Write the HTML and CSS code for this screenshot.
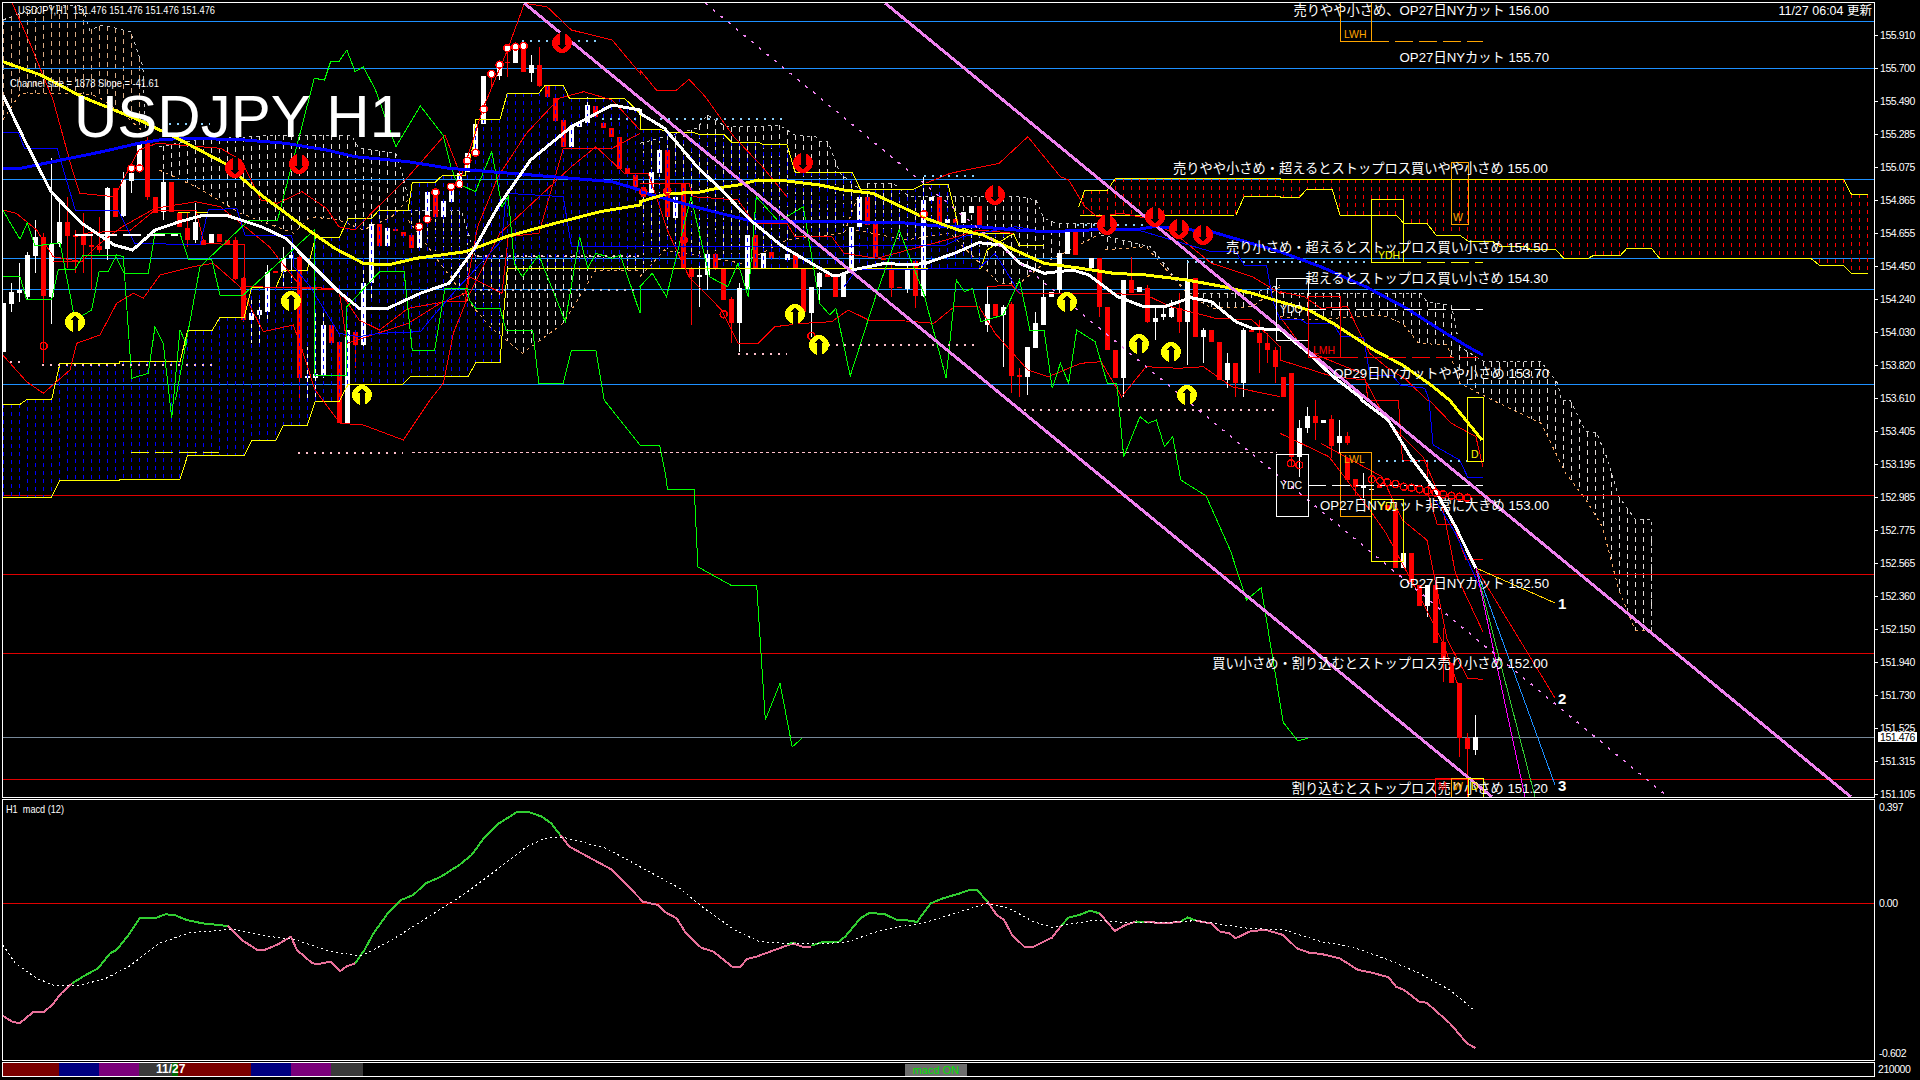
FILE: index.html
```html
<!DOCTYPE html>
<html lang="ja">
<head>
<meta charset="utf-8">
<title>USDJPY H1</title>
<link rel="stylesheet" href="styles.css">
</head>
<body>
<main class="terminal">
  <section class="pane pane-main">
    <div class="plot">
      <svg id="main-chart" class="chart" viewBox="3 3 1871 794" preserveAspectRatio="none">
        <g id="main-layer"></g>
        <text class="title" x="74" y="137">USDJPY H1</text>
        <text class="info" x="18" y="14" textLength="197" lengthAdjust="spacingAndGlyphs">USDJPY,H1  151.476 151.476 151.476 151.476</text>
        <text class="info" x="10" y="87" textLength="149" lengthAdjust="spacingAndGlyphs">Channel size = 1878 Slope = -41.61</text>
        <text class="stamp" x="1872" y="15">11/27 06:04 更新</text>
        <text class="note" x="1549" y="15">売りやや小さめ、OP27日NYカット 156.00</text>
        <text class="note" x="1549" y="62">OP27日NYカット 155.70</text>
        <text class="note" x="1548" y="173">売りやや小さめ・超えるとストップロス買いやや小さめ 155.00</text>
        <text class="note" x="1548" y="252">売り小さめ・超えるとストップロス買い小さめ 154.50</text>
        <text class="note" x="1548" y="283">超えるとストップロス買い小さめ 154.30</text>
        <text class="note" x="1549" y="378">OP29日NYカットやや小さめ 153.70</text>
        <text class="note" x="1549" y="510">OP27日NYカット非常に大きめ 153.00</text>
        <text class="note" x="1549" y="588">OP27日NYカット 152.50</text>
        <text class="note" x="1548" y="668">買い小さめ・割り込むとストップロス売り小さめ 152.00</text>
        <text class="note" x="1548" y="793">割り込むとストップロス売り小さめ 151.20</text>
        <text class="box-label orange" x="1344" y="38">LWH</text>
        <text class="box-label orange" x="1453" y="221">W</text>
        <text class="box-label yellow" x="1378" y="259">YDH</text>
        <text class="box-label white" x="1280" y="313">YDO</text>
        <text class="box-label red" x="1313" y="354">LMH</text>
        <text class="box-label white" x="1280" y="489">YDC</text>
        <text class="box-label orange" x="1344" y="463">LWL</text>
        <text class="box-label yellow" x="1378" y="510">YDL</text>
        <text class="box-label yellow" x="1471" y="458">D</text>
        <text class="box-label red" x="1438" y="790">M</text>
        <text class="box-label orange" x="1453" y="790">W</text>
        <text class="box-label yellow" x="1471" y="790">D</text>
        <text class="fib" x="1558" y="609">1</text>
        <text class="fib" x="1558" y="704">2</text>
        <text class="fib" x="1558" y="791">3</text>
      </svg>
    </div>
    <div class="axis axis-price">
      <span>155.910</span><span>155.700</span><span>155.490</span><span>155.285</span>
      <span>155.075</span><span>154.865</span><span>154.655</span><span>154.450</span>
      <span>154.240</span><span>154.030</span><span>153.820</span><span>153.610</span>
      <span>153.405</span><span>153.195</span><span>152.985</span><span>152.775</span>
      <span>152.565</span><span>152.360</span><span>152.150</span><span>151.940</span>
      <span>151.730</span><span>151.525</span><span>151.315</span><span>151.105</span>
      <b class="price-tag">151.476</b>
    </div>
  </section>

  <section class="pane pane-macd">
    <div class="plot">
      <svg id="macd-chart" class="chart" viewBox="3 800 1871 260" preserveAspectRatio="none">
        <g id="macd-layer"></g>
        <text class="info" x="6" y="813" textLength="58" lengthAdjust="spacingAndGlyphs">H1  macd (12)</text>
      </svg>
    </div>
    <div class="axis axis-macd">
      <span class="tick-top">0.397</span>
      <span class="zero">0.00</span>
      <span class="tick-low">-0.602</span>
    </div>
  </section>

  <section class="pane pane-strip">
    <div class="plot strip">
      <i class="seg seg-red seg-w1"></i>
      <i class="seg seg-blue seg-w2"></i>
      <i class="seg seg-purple seg-w2"></i>
      <i class="seg seg-gray seg-w3"></i>
      <i class="seg seg-green seg-w4"></i>
      <i class="seg seg-red seg-w5"></i>
      <i class="seg seg-blue seg-w2"></i>
      <i class="seg seg-purple seg-w2"></i>
      <i class="seg seg-gray seg-w6"></i>
      <b class="strip-date">11/27</b>
      <span class="strip-ok">macd ON</span>
    </div>
    <div class="axis axis-strip"><span>210000</span></div>
  </section>
</main>
<script src="script.js"></script>
</body>
</html>
```

FILE: styles.css
```css
* { box-sizing: border-box; }

html, body {
  margin: 0;
  width: 1920px;
  height: 1080px;
  overflow: hidden;
  background: #000;
}

body {
  color: #fff;
  font-family: "Liberation Sans", "Noto Sans CJK JP", sans-serif;
}

.terminal {
  display: flex;
  flex-direction: column;
  gap: 1px;
  padding: 2px 0 0 2px;
  width: 1920px;
  height: 1080px;
}

.pane { display: flex; flex: none; position: relative; }
.pane-main { height: 796px; }
.pane-macd { height: 262px; }
.pane-strip { height: 15px; }

.plot {
  flex: none;
  width: 1873px;
  height: 100%;
  border: 1px solid #fff;
  overflow: hidden;
}

.chart {
  display: block;
  width: 100%;
  height: 100%;
  shape-rendering: crispEdges;
}

.axis {
  position: relative;
  flex: 1;
  font-size: 10.5px;
  letter-spacing: -0.45px;
  line-height: 12px;
  color: #fff;
}

.axis span { display: block; padding-left: 5px; white-space: nowrap; }

.axis-price { padding-top: 11px; display: flex; flex-direction: column; }
.axis-price span {
  position: relative;
  flex: none;
  height: 33px;
  line-height: 44px;
}
.axis-price span::before {
  content: "";
  position: absolute;
  left: 0;
  top: 22px;
  width: 3px;
  height: 1px;
  background: #fff;
}

.price-tag {
  position: absolute;
  left: 3px;
  top: 730px;
  width: 39px;
  height: 10px;
  background: #fff;
  color: #000;
  font-weight: normal;
  font-size: 10.5px;
  line-height: 10px;
  text-align: center;
}

.axis-macd { padding-top: 2px; }
.axis-macd span { padding-left: 4px; }
.axis-macd .zero { position: relative; margin-top: 84px; }
.axis-macd .zero::before {
  content: "";
  position: absolute;
  left: 2px;
  top: 0;
  width: 4px;
  height: 12px;
  background: #f00;
  z-index: -1;
}
.axis-macd .tick-low { margin-top: 138px; }

.axis-strip { padding-top: 1px; }
.axis-strip span { padding-left: 3px; }

.strip { display: flex; align-items: stretch; position: relative; }
.seg { display: block; flex: none; }
.seg-red { background: #7a0000; }
.seg-blue { background: #000080; }
.seg-purple { background: #7a007a; }
.seg-gray { background: #3a3a3a; }
.seg-green { background: #006a00; }
.seg-w1 { width: 56px; }
.seg-w2 { width: 40px; }
.seg-w3 { width: 33px; }
.seg-w4 { width: 6px; }
.seg-w5 { width: 73px; }
.seg-w6 { width: 32px; }

.strip-date {
  position: absolute;
  left: 153px;
  top: 0;
  font-size: 12px;
  line-height: 13px;
  color: #fff;
}

.strip-ok {
  position: absolute;
  left: 902px;
  top: 1px;
  width: 62px;
  height: 12px;
  background: #6e6e6e;
  color: #00e000;
  font-size: 11px;
  line-height: 13px;
  text-align: center;
}

.title {
  fill: #fff;
  font-family: "Liberation Sans", sans-serif;
  font-size: 60px;
}

.info {
  fill: #fff;
  font-size: 10.5px;
  white-space: pre;
}

.stamp {
  fill: #fff;
  font-family: "Liberation Sans", "Noto Sans CJK JP", sans-serif;
  font-size: 12.5px;
  text-anchor: end;
}

.note {
  fill: #fff;
  font-family: "Liberation Sans", "Noto Sans CJK JP", sans-serif;
  font-size: 13.25px;
  text-anchor: end;
}

.box-label { font-size: 10.5px; }
.orange { fill: #ffa500; }
.yellow { fill: #ffff00; }
.white { fill: #fff; }
.red { fill: #ff0000; }

.fib {
  fill: #fff;
  font-weight: bold;
  font-size: 15px;
}
```

FILE: script.js
```js
const NS = 'http://www.w3.org/2000/svg';
const scaler = (x0, y0, kx, ky) => pts => {
  const out = [];
  for (let i = 0; i < pts.length; i += 2) out.push([x0 + pts[i] / kx, y0 + pts[i + 1] / ky]);
  return out;
};
const Z1 = scaler(0, 0, 2.45, 3);
const Z2 = scaler(640, 0, 2.45, 3);
const Z3 = scaler(1280, 0, 2.45, 3);
const Z4 = scaler(1280, 400, 2.45, 3);
const Z5 = scaler(0, 780, 1.633, 3);
const Z6 = scaler(960, 780, 1.633, 3);
const Z7 = scaler(0, 200, 3, 3);
const Z8 = scaler(640, 160, 2.45, 3);
const O = scaler(0, 0, 0.8167, 0.8167);

function el(parent, name, attrs) {
  const n = document.createElementNS(NS, name);
  for (const k in attrs) n.setAttribute(k, attrs[k]);
  parent.appendChild(n);
  return n;
}
function poly(g, pts, stroke, width, dash) {
  const a = { points: pts.map(p => p[0].toFixed(1) + ',' + p[1].toFixed(1)).join(' '), fill: 'none', stroke, 'stroke-width': width || 1 };
  if (dash) a['stroke-dasharray'] = dash;
  el(g, 'polyline', a);
}
function line(g, x1, y1, x2, y2, stroke, width, dash) {
  poly(g, [[x1, y1], [x2, y2]], stroke, width, dash);
}
function yAt(pts, x) {
  if (x < pts[0][0] || x > pts[pts.length - 1][0]) return null;
  for (let i = 1; i < pts.length; i++) {
    if (x <= pts[i][0]) {
      const a = pts[i - 1], b = pts[i];
      const d = b[0] - a[0];
      return d === 0 ? b[1] : a[1] + (b[1] - a[1]) * (x - a[0]) / d;
    }
  }
  return null;
}
function hatch(g, up, low, color, dash) {
  for (let x = 3.5; x < 1872; x += 8) {
    const a = yAt(up, x), b = yAt(low, x);
    if (a === null || b === null || b - a < 2) continue;
    line(g, x, a, x, b, color, 1, dash || '4 4');
  }
}

const main = document.getElementById('main-layer');

/* Ichimoku step lines */
const senkouLow = Z7([8,891,155,891,180,841,358,841,358,838,540,838,563,766,733,766,755,721,828,721,850,676,922,676,946,604,1018,604,1045,552,1210,552,1233,529,1405,529,1428,487,1500,487])
  .concat(Z1([1225,1085,1243,805,1568,805]), Z2([835,805,850,750,915,700,928,735,990,735]));
const senkouHigh = Z7([8,613,60,613,82,598,155,598,180,490,358,490,358,485,540,485,563,392,636,392,660,352,733,352,755,262,828,262,850,211,922,211,946,112,1018,112,1045,55,1115,55,1135,32,1210,32])
  .concat(Z1([1000,630,1010,548,1065,548,1085,525,1140,525,1160,435,1165,358,1225,358,1243,280,1320,280,1335,257,1380,257,1395,295,1530,295,1568,340]),
          Z2([0,388,50,388,70,397,130,397,145,403,205,403,225,427,290,427,300,433,360,433,380,517,520,517,540,568,670,568,695,553,755,553,775,653,780,680,830,700,915,700]));
const cloudUp = senkouHigh.filter(p => !(p[0] > 406 && p[0] < 412 && p[1] > 200));
const red1 = Z2([1075,620,1090,570,1145,570,1165,535,1568,535]).concat(Z3([0,537,1380,537,1400,583,1440,583]));
const red2 = Z2([1075,645,1260,647,1460,645,1480,590,1568,590]).concat(Z3([0,592,48,592,65,568,128,568,147,645,285,645,303,670,360,670,382,705,440,705,460,723,520,723,537,738,600,738,612,748,675,748,695,775,755,775,770,765,835,765,850,745,910,745,930,775,1300,775,1322,796,1380,796,1400,820,1440,820]));

/* Secondary cloud hatching */
const pale = '#e4dcd8', peach = '#f4a460';
const clouds = [
  [Z1([7,60,60,35,120,15,200,15,220,90,250,75,320,95,350,200,356,400]), Z1([7,360,50,280,200,280,240,290,300,340,356,400]), '#d8aa84'],
  [Z1([390,440,480,420,680,405,860,405,880,445,970,460,990,540,1000,600]), Z1([390,510,480,560,590,640,720,700,760,650,830,660,890,690,960,650,1000,600]), pale],
  [Z1([1000,630,1130,630,1165,770,1568,770]), Z1([1000,660,1145,900,1200,980,1280,1060,1380,970,1460,810,1568,810]), pale],
  [Z2([0,430,140,385,165,345,210,380,280,380,340,375,380,405,430,410,440,425,460,425,490,520,540,570]), Z2([0,830,60,750,250,790,360,720,500,700,540,570]), pale],
  [Z2([555,550,620,550,660,590,760,590,930,590,970,600,990,655,1020,670,1130,670]), Z2([530,690,650,720,760,700,880,850,930,850,990,790,1130,700]), pale],
  [Z2([1130,705,1250,740,1290,800,1340,880,1500,880,1568,855]), Z2([1140,750,1240,740,1340,880,1400,925,1500,920,1568,860]), pale],
  [Z3([0,880,345,880,360,905,420,915,440,1040,500,1085,640,1085,680,1150,690,1200]).concat(Z4([710,0,750,95,775,97,800,170,830,290,870,358,910,358,911,690])),
   Z3([0,950,70,960,250,945,300,970,340,1030,410,1035,440,1150,520,1200]).concat(Z4([640,70,700,220,750,300,790,380,830,570,870,690,911,690])), pale]
];
clouds.forEach(c => {
  hatch(main, c[0], c[1], c[2], '5 4');
  poly(main, c[0], '#c8c8c8', 1, '3 4');
  poly(main, c[1], peach, 1, '3 4');
});

/* Horizontal price levels */
[21, 68, 179, 258, 289, 384].forEach(y => line(main, 3, y + .5, 1874, y + .5, '#1e90ff'));
[495, 574, 653, 779].forEach(y => line(main, 3, y + .5, 1874, y + .5, '#e00000'));
line(main, 3, 737.5, 1874, 737.5, '#778899');

/* Candles */
const candles = [
 [Z1, 'w8,910,1055;w28,875,912,850,935;w48,870,880,790,905;w67,765,890,755,900;w87,712,768,660,820;r107,710,888,700,1090;w126,732,890,475,972;w146,667,732,610,740;r165,665,708,590,805;r185,705,710,690,820;r205,708,735,640,820;r224,735,740,700,870;r244,737,750,650,760;w263,565,748,560,780;r283,565,650;w302,540,648,515,650;w322,518,542,490,580;w342,430,495;r361,420,590,410,600;r381,590,638;w401,545,635,515,660;r420,545,635;r440,640,682;r459,685,720,640,740;w479,665,720,610,730;r499,720,735;w518,702,730;r538,702,725;r557,720,735;r577,720,838,710,840;r597,835,960,830,965;w616,940,960,900,1030;w636,930,945,900,1030;w655,815,935,795,965;r675,813,818;w695,775,815,740,860;w714,765,775,730,850;r734,770,1135,760,1200;w753,1128,1135,1040,1200;w773,1122,1133,935,1200;w793,975,1125,935,1135;r812,975,1030;r832,1026,1268;w851,990,1268;r871,995,1035,990,1105;w890,850,1035,810,1040;w910,672,850,670,900;r930,672,737;w949,685,737;r969,688,692;r988,695,708;r1008,705,745;w1027,680,745;w1047,577,660;r1067,578,650;w1086,603,650;w1106,555,605;w1125,518,565;w1145,460,515;w1165,372,460;w1185,228,372;r1204,225,230,215,265;w1224,190,228,180,240;r1243,185,188,150,230;w1263,148,190;r1283,150,217;w1302,195,218,165,245;r1322,195,258,140,260;r1341,258,290;r1361,295,362;r1380,360,440;w1400,380,440;w1420,365,380;w1439,315,368,290,370;r1459,318,352;r1478,368,385;r1498,385,412;r1518,412,508;r1537,505,520;r1557,525,560'],
 [Z2, 'r8,560,590;w28,515,580;w47,450,518;r67,450,650;w87,590,655;r107,550,805;r126,808,830,800,975;w146,825,830,790,920;w165,762,825,762,870;r185,762,805,760,810;r204,808,900;r224,898,970,890,1030;w244,865,970,850,1055;w263,705,868;r283,705,805;w302,760,805;r322,755,775;w361,762,780;r381,762,805;r400,808,935;w420,860,940,860,1010;w440,820,860,815,900;r459,822,830;r479,825,890;w499,820,890;w518,680,805;w538,590,680;r557,590,675;r577,670,770;r597,775,778;r616,805,865,790,890;r636,860,865;w655,805,868,785,880;r675,783,887,783,925;w695,600,888,530,890;w714,590,604;r734,590,668;w753,658,668;r773,658,668;w793,635,668;w812,618,640;r832,618,678;w851,912,975,860,995;r871,912,948;w890,920,945,915,1100;r910,912,1128,905,1180;r930,1125,1130,1105,1190;w949,1040,1130,1040,1185;w969,970,1045,935,1045;w988,890,975,840,975;w1008,875,892;w1028,760,870,760,880;w1047,695,763;r1067,695,765;w1106,775,805;r1126,775,920,775,950;r1145,920,1050;r1165,1050,1135;w1184,840,1135,840,1190;r1204,840,880,770,880;w1224,860,875;r1243,865,965,855,970;w1263,955,965,925,1020;w1282,943,950,925,960;w1302,925,950,900,955;r1322,925,965,880,1000;w1341,840,965,780,1095;r1361,835,1010;w1381,990,1010,985,1090;r1400,990,1025;r1420,1025,1140;w1439,1090,1140,1060,1165;r1459,1090,1150,1090,1190;w1478,990,1150,985,1190;r1498,990,995;r1518,1000,1030,960,1120;r1537,1030,1050,1000,1090;r1557,1050,1100,1040,1150'],
 [Z4, 'r8,-70,-10;r27,-80,170,-80,200;w47,85,170,60,230;w67,47,85,20,100;r87,47,68,0,120;w106,60,68;r126,57,137,45,175;w146,108,130,60,160;r165,108,130,95,135;r165,175,240;r185,237,260,237,285;w205,258,262,220,295;w224,266,270;r244,255,265;r263,315,330;r283,328,503;w302,460,503;r322,460,545;r342,555,617;w361,555,617,555,650;r381,555,728,555,730;r401,725,780,685,845;r420,790,850;r440,848,1015,848,1070;r459,1015,1048,1000,1195;w479,1010,1050,945,1065']
];
candles.forEach(([z, str]) => str.split(';').forEach(s => {
  const col = s[0] === 'w' ? '#fff' : '#f00';
  const v = s.slice(1).split(',').map(Number);
  const p = z([v[0], v[1], v[0], v[2]]);
  const x = Math.round((p[0][0] - 3) / 8) * 8 + 3;
  if (v.length > 3) {
    const w = z([v[0], v[3], v[0], v[4]]);
    line(main, x + .5, w[0][1], x + .5, w[1][1], col);
  }
  el(main, 'rect', { x: x - 2, y: p[0][1].toFixed(1), width: 5, height: Math.max(1.5, p[1][1] - p[0][1]).toFixed(1), fill: col });
}));

/* Cloud hatch runs through the candles */
hatch(main, cloudUp, senkouLow, '#0000ff');
hatch(main, red1, red2, '#ff0000');
poly(main, senkouLow, '#ffff00');
poly(main, senkouHigh, '#ffff00');
poly(main, red1, '#ffff00');
poly(main, red2, '#ffff00');

/* Thin indicator lines */
const reds = [
  Z1([30,10,70,120,130,300,175,500,195,580,280,590,340,450,385,430,440,435,540,445,590,480,640,600,680,610,740,575,800,625,830,680,870,690,910,640,1000,530,1090,405,1130,530,1185,320,1240,160,1285,10,1340,20,1400,90,1500,120,1568,220]).concat(Z2([0,210,40,270,90,270,120,238,160,290,230,410,300,500,360,590])),
  Z2([700,550,760,520,880,490,950,410,1030,530,1050,540,1090,620,1120,650,1180,640,1240,655,1320,710,1400,790,1500,830,1568,880]).concat(Z3([0,875,60,890,100,925,165,920,220,1060,260,1100,310,1140,360,1200]), Z4([365,0,420,70,480,110,497,200])),
  Z1([7,630,40,640,90,690,130,770,200,785,240,735,300,680,380,625,480,605,540,620,600,680,660,740,740,865,830,870,880,960,930,990,1000,925,1090,905,1140,880,1170,680,1220,530,1290,400,1370,295,1430,275,1500,300,1568,390]),
  Z7([8,465,80,545,130,580,210,510,230,430,300,405,350,310,400,280,430,295,480,225,580,200,640,190,720,260,790,395,880,375,900,430,945,570,1020,670,1090,675,1210,720,1290,600,1330,550,1360,400,1400,300,1500,100]).concat(Z1([1400,500,1460,440,1530,520]), Z2([20,520,70,700,120,830,200,930,240,1030,290,1030,330,980,400,970,470,965,510,930,560,960,620,960,720,970,770,920,830,918,870,1000,950,1110,1000,1130,1080,1090,1130,1085,1180,1190,1240,1100,1320,1105,1380,1100,1450,1160,1568,1190])),
  Z1([130,785,205,785,205,700,320,690,380,630,480,630,500,730,600,735,600,860,830,865,850,1030,1000,970,1085,905,1140,905,1150,830,1230,880,1245,710,1320,700,1380,445,1500,445,1568,400]),
  Z2([0,550,120,550,130,590,240,600,280,670,360,670,380,710,470,710,500,760,580,775,750,720,830,690,915,700]),
  Z2([850,860,910,855,930,880,1140,880,1240,885,1300,920,1410,955,1500,960,1568,1040]).concat(Z3([0,1080,130,1130,210,1140,215,1200]), Z4([290,0,300,180,360,180,365,290,385,372,425,372,455,478,497,478])),
  Z4([0,-250,60,-150,120,-120,200,-80,260,60,350,170,395,300,430,520,497,695]),
  Z4([100,130,250,230,300,360,360,420,410,720,460,835,497,838]),
  Z4([0,100,120,170,220,330,260,400,330,560,400,730,440,870])
];
reds.forEach(p => poly(main, p, '#ff0000'));

const blues = [
  Z1([7,397,45,397,60,445,140,445,185,632,290,632,330,730,440,733,490,735,510,630,580,625,600,705,715,705,720,800,760,860,830,1000,880,1010,930,1000,1030,995,1060,950,1110,880,1170,800,1230,720,1240,580,1380,590,1400,740,1568,740]).concat(Z2([0,740,500,740,560,735,750,735,790,710,830,700,920,680,990,695,1220,690,1400,755,1460,755,1480,795,1535,795,1550,900,1568,960])),
  Z3([0,958,50,958,65,970,130,970,150,1010,205,1012,220,1125,275,1125,295,1155,355,1165,365,1200]).concat(Z4([365,0,375,135,440,180,460,232,497,232])),
  Z2([500,860,530,810,830,805,870,760,930,880]),
  Z4([380,300,430,400,500,590])
];
blues.forEach(p => poly(main, p, '#0000ff'));

const greens = [
  Z7([8,30,60,118,82,68,105,138,180,128,225,360,275,330,297,215,325,215,350,165,370,170,395,535,445,520,465,380,490,430,515,655,540,390,560,435]),
  Z7([8,230,60,230,80,300,155,298,175,208,225,208,250,165,345,165,372,220,445,220,465,100,540,100,565,178,635,178,660,285,730,285]).concat(Z1([770,690,770,1125,850,1125,850,920,930,815,990,815,1010,1050,1065,1050,1090,865,1145,865,1150,900,1165,925,1225,925,1240,990,1305,990,1320,1150,1380,1150,1400,1050,1460,1050,1480,1200]), Z8([0,855,48,855,65,960]), O([545,400,567,400,570,463,597,478,618,478,625,588,637,558,647,610,655,603])),
  Z1([430,1200,490,800,610,660,680,660,770,235,795,240,810,185,830,185,850,150,870,215,890,200,920,270,970,440,1030,318,1085,405,1105,500,1120,550,1165,575,1205,455,1230,620,1245,590,1260,790,1280,830,1320,765,1385,965,1420,710,1440,805,1460,760,1500,775,1520,765,1568,940]).concat(Z2([0,860,30,820,65,890,125,590,170,830,215,860,240,790,265,890,285,590,340,665,400,620,440,910,465,945,480,925,515,1128,580,880,635,690,695,880,750,1135,775,840,795,875,815,865,835,965,890,945,930,840,955,990,990,990,1010,1165,1030,1090,1050,1150,1070,990,1115,1025,1145,1150,1168,1150,1172,1200]), Z8([1172,720,1185,890,1225,770,1245,790,1265,780,1285,860,1305,830,1325,960]), O([985,405,1005,450,1018,490,1030,480,1048,590,1060,605,1068,603]))
];
greens.forEach(p => poly(main, p, '#00ff00'));

/* Dotted and dashed reference levels */
const dots = [
  [169,210,123,'#87cefa'],[522,596,40,'#87cefa'],[602,640,118,'#87cefa'],[660,787,118,'#87cefa'],[924,979,175,'#87cefa'],[1077,1146,224,'#87cefa'],[1187,1368,261,'#87cefa'],[1378,1468,460,'#87cefa'],
  [10,20,361,'#ffc0cb'],[42,212,364,'#ffc0cb'],[298,403,452,'#ffc0cb'],[738,787,353,'#ffc0cb'],[820,979,344,'#ffc0cb'],[1024,1280,409,'#ffc0cb'],[477,640,255,'#ffc0cb'],[480,640,289,'#d8c8d0']
];
dots.forEach(d => line(main, d[0], d[2] + .5, d[1], d[2] + .5, d[3], 2, '2 6'));
line(main, 412, 452.5, 1277, 452.5, '#ffc0cb', 1, '3 3');
line(main, 131, 452.5, 219, 452.5, '#ffff00', 1, '18 6');
line(main, 75, 234.5, 178, 234.5, '#fff', 2, '18 6');
line(main, 178, 212.5, 212, 212.5, '#ffff00', 1, '12 6');

/* Moving averages */
const maWhite = Z1([7,285,60,420,125,575,200,670,280,735,325,750,380,690,440,665,500,645,560,648,640,680,700,715,760,790,830,875,880,925,950,925,1030,880,1100,850,1160,750,1220,620,1300,480,1400,380,1500,315,1568,330])
  .concat(Z2([0,340,60,385,140,500,200,570,270,660,350,740,420,790,470,825,490,825,520,810,600,790,660,795,700,790,770,760,830,728,885,735,930,790,990,820,1060,810,1100,825,1170,890,1230,918,1290,918,1350,893,1400,905,1460,965,1500,985,1568,990]),
          Z3([0,985,30,1020,70,1060,130,1130,200,1195]), Z4([200,0,265,60,320,170,380,270,430,380,480,505]));
const maYellow = Z1([7,185,100,225,200,290,350,365,450,425,550,490,640,585,750,685,820,745,890,790,950,795,1020,775,1140,755,1240,710,1360,670,1470,635,1568,615])
  .concat(Z2([0,605,70,580,140,578,200,562,240,555,290,540,360,543,440,555,500,570,570,580,640,620,700,655,780,690,840,705,900,740,990,790,1080,805,1160,820,1240,825,1340,840,1430,860,1500,880,1568,905]),
          Z3([0,905,70,930,130,970,230,1050,300,1095,370,1155,415,1200]), Z4([415,0,495,120]));
const maBlue = Z1([7,505,50,505,130,485,250,455,340,430,400,418,480,415,600,420,700,430,800,450,870,470,1000,485,1100,505,1250,520,1400,535,1500,545,1568,570])
  .concat(Z2([0,575,90,605,180,635,280,665,500,665,640,668,750,680,830,680,920,690,1000,695,1100,690,1220,688,1260,680,1400,695,1568,755]),
          Z3([0,755,100,800,210,860,310,925,400,995,460,1040,497,1065]));
poly(main, maBlue, '#0000ff', 3);
poly(main, maYellow, '#ffff00', 3);
poly(main, maWhite, '#ffffff', 3);

/* Regression channel */
line(main, 524, 3, 1492, 797, '#ee82ee', 3);
line(main, 885, 3, 1851, 797, '#ee82ee', 3);
line(main, 705, 3, 1668, 797, '#ee82ee', 1.5, '3 7');

/* Level boxes */
const boxes = [
  [1340,2,31,39,'#ffa500'],[1451,162,17,62,'#ffa500'],[1371,199,32,63,'#ffff00'],[1276,278,32,62,'#fff'],[1308,296,32,61,'#f00'],
  [1276,454,32,62,'#fff'],[1340,452,31,64,'#ffa500'],[1371,499,32,62,'#ffff00'],[1467,397,16,64,'#ffff00'],
  [1435,778,16,22,'#f00'],[1451,778,17,22,'#ffa500'],[1468,778,15,22,'#ffff00']
];
boxes.forEach(b => el(main, 'rect', { x: b[0] + .5, y: b[1] + .5, width: b[2], height: b[3], fill: 'none', stroke: b[4] }));
[[1371,1483,41,'#ffa500'],[1403,1483,262,'#ffff00'],[1308,1483,309,'#fff'],[1340,1480,357,'#f00'],[1308,1483,485,'#fff']]
  .forEach(d => line(main, d[0], d[2] + .5, d[1], d[2] + .5, d[3], 1, '18 6'));

/* Projection fan */
[[1555,603,'#ffd000'],[1555,698,'#ff0000'],[1555,785,'#1e90ff'],[1535,797,'#32cd32'],[1525,797,'#ff00ff']]
  .forEach(f => line(main, 1476, 568, f[0], f[1], f[2]));

/* Ring markers */
const ring = (x, y, fill) => el(main, 'circle', { cx: x.toFixed(1), cy: y.toFixed(1), r: 3.5, fill: fill, stroke: '#f00', 'stroke-width': 1.5 });
Z1([322,505,342,505,1027,680,1047,658,1067,577,1105,560,1125,552,1145,482,1165,458,1185,328,1204,222,1224,194,1243,145,1263,140,1283,138]).forEach(p => ring(p[0], p[1], '#fff'));
Z1([107,1038]).concat(Z2([205,943,107,720,420,1008,67,572,8,575,695,643]), Z4([27,190,47,195,225,238,245,243,263,247,283,252,303,260,322,263,342,268,361,272,381,278,400,283,420,287,440,290,459,293])).forEach(p => ring(p[0], p[1], 'none'));

/* Arrow badges */
const badge = (x, y, col, flip) => {
  const g = el(main, 'g', { transform: 'translate(' + x + ' ' + y + ')' + (flip ? ' scale(1 -1)' : '') });
  el(g, 'circle', { r: 10, fill: col });
  el(g, 'path', { d: 'M-2.5 11V-2H-4.5L0-7 4.5-2H2.5V11Z', fill: '#000' });
};
[[75,322],[291,301],[362,395],[795,314],[819,345],[1067,302],[1139,344],[1171,352],[1187,395]].forEach(p => badge(p[0], p[1], '#ffff00', false));
[[235,168],[299,164],[562,43],[803,163],[995,195],[1107,225],[1155,217],[1179,229],[1203,235]].forEach(p => badge(p[0], p[1], '#ff0000', true));

/* MACD pane */
const macd = document.getElementById('macd-layer');
line(macd, 3, 903.5, 1874, 903.5, '#e00000');
const PINK = '#e8709a', GREEN = '#32cd32';
const segs = [
  [PINK, Z5([5,708,20,725,32,730,55,695,72,695,85,675,100,640,118,610])],
  [GREEN, Z5([118,610,135,590,160,565,180,520,190,510,210,465,228,415,255,413,270,403,285,405,305,420,330,430,372,438])],
  [PINK, Z5([372,438,395,480,420,510,432,510,455,492,475,470])],
  [PINK, Z5([475,470,485,510,510,550,520,552,540,545,555,574,565,560,580,550])],
  [GREEN, Z5([580,550,595,510,610,460,635,395,655,360,675,345,695,310,720,290,750,255,770,225,790,175,815,130,845,95,865,97,885,110,900,130,915,165])],
  [PINK, Z5([915,165,930,200,960,230,1000,270,1050,365,1075,375,1085,395,1105,415,1120,460,1145,503,1165,515,1197,562,1208,562,1220,537,1235,530,1295,490])],
  [GREEN, Z5([1285,492,1300,488])],
  [PINK, Z5([1295,490,1310,500,1325,500])],
  [GREEN, Z5([1325,497,1345,485,1370,485,1380,470,1405,415,1420,398,1445,403,1465,420,1490,422,1497,427,1520,370,1540,355,1568,340])],
  [GREEN, Z6([0,340,15,330,28,330,45,365])],
  [PINK, Z6([45,365,60,405,72,420,85,465,105,500,120,500,150,473,165,438])],
  [GREEN, Z6([165,438,177,413,195,405,212,392,228,400])],
  [PINK, Z6([228,400,253,453,270,435,290,423])],
  [GREEN, Z6([285,425,300,425])],
  [PINK, Z6([300,425,335,430,360,425])],
  [GREEN, Z6([360,425,372,412,385,422])],
  [PINK, Z6([385,422,410,430,425,455,440,460,450,475,475,453,500,450,528,465,550,505,570,518,590,522,620,535,650,570,670,577,700,592,712,620,725,630,750,665,762,668,800,730,828,790,842,805])]
];
segs.forEach(s => poly(macd, s[1], s[0], 2));
const signal = Z5([5,495,25,550,60,595,90,617,130,615,170,598,210,560,260,490,310,458,380,448,430,467,480,478,540,515,590,528,640,480,700,410,760,340,800,285,860,200,890,175,920,172,990,205,1050,265,1110,325,1150,385,1200,450,1240,485,1300,492,1380,488,1440,450,1510,428,1568,395])
  .concat(Z6([0,395,45,370,80,385,120,425,150,442,220,420,270,428,340,427,385,422,470,445,530,450,590,485,640,500,700,540,750,580,800,630,838,688]));
poly(macd, signal, '#fff', 1, '2 3');
```
